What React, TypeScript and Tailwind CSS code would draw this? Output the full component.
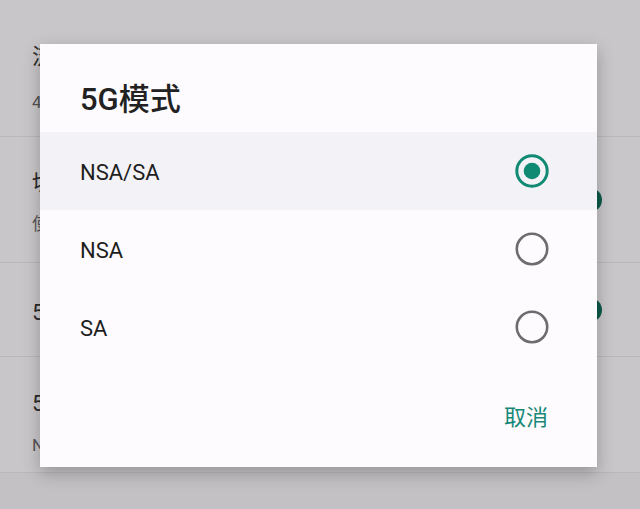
import React from "react";

const font = { fontFamily: "Roboto, 'Noto Sans CJK SC', sans-serif" };

function Radio({ checked }: { checked: boolean }) {
  return (
    <svg width="34" height="34" viewBox="0 0 34 34">
      {checked ? (
        <>
          <circle cx="17" cy="17" r="15.2" fill="none" stroke="#108a73" strokeWidth="3" />
          <circle cx="17" cy="17" r="8.3" fill="#108a73" />
        </>
      ) : (
        <circle cx="17" cy="17" r="15.2" fill="none" stroke="#6e6c6e" strokeWidth="2.6" />
      )}
    </svg>
  );
}

function BgRow({
  h,
  title,
  sub,
  toggle,
  titleTop,
  subGap,
}: {
  h: string;
  title: string;
  sub?: string;
  toggle?: boolean;
  titleTop: string;
  subGap?: string;
}) {
  return (
    <div className={`flex items-center justify-between border-b border-[#b9b7b9] pl-[32px] pr-[38px] ${h}`}>
      <div className={`flex flex-col self-start ${titleTop}`}>
        <div className="text-[22px] leading-[26px] text-[#2a2a2a]">{title}</div>
        {sub && <div className={`text-[17px] leading-[20px] text-[#555355] ${subGap}`}>{sub}</div>}
      </div>
      {toggle && <div className="h-[24px] w-[24px] rounded-full bg-[#0d5a4b]" />}
    </div>
  );
}

export default function App() {
  return (
    <div className="relative h-[509px] w-[640px] overflow-hidden bg-[#c8c6c8]" style={font}>
      <div className="flex flex-col">
        <div className="h-[44px]" />
        <div className="flex h-[93px] flex-col border-b border-[#b9b7b9] pl-[32px]">
          <div className="text-[22px] leading-[26px] text-[#2a2a2a]">流量</div>
          <div className="pt-[22px] text-[17px] leading-[20px] text-[#555355]">4G</div>
        </div>
        <BgRow h="h-[126px]" title="切换" sub="使用" toggle titleTop="pt-[33px]" subGap="pt-[18px]" />
        <BgRow h="h-[94px]" title="5G" toggle titleTop="pt-[37px]" />
        <BgRow h="h-[116px]" title="5G" sub="NSA" titleTop="pt-[34px]" subGap="pt-[18px]" />
        <div className="h-[40px] bg-[#c3c1c3]" />
      </div>

      <div className="absolute left-[40px] top-[44px] flex h-[423px] w-[557px] flex-col bg-[#fdfbfd] shadow-[0_6px_16px_rgba(0,0,0,0.25)]">
        <div className="flex h-[88px] items-center pl-[40px] pt-[22px]">
          <span className="text-[31px] font-medium leading-none text-[#222222]">5G模式</span>
        </div>
        {[
          { label: "NSA/SA", checked: true },
          { label: "NSA", checked: false },
          { label: "SA", checked: false },
        ].map((r) => (
          <div
            key={r.label}
            className={`flex h-[78px] items-center justify-between pl-[40px] pr-[48px] ${r.checked ? "bg-[#f3f3f7]" : ""}`}
          >
            <span className="pt-[2px] text-[22px] text-[#1e1e1e]">{r.label}</span>
            <Radio checked={r.checked} />
          </div>
        ))}
        <div className="flex flex-1 items-center justify-end pr-[49px] pt-[2px]">
          <span className="text-[22px] text-[#178877]">取消</span>
        </div>
      </div>
    </div>
  );
}
